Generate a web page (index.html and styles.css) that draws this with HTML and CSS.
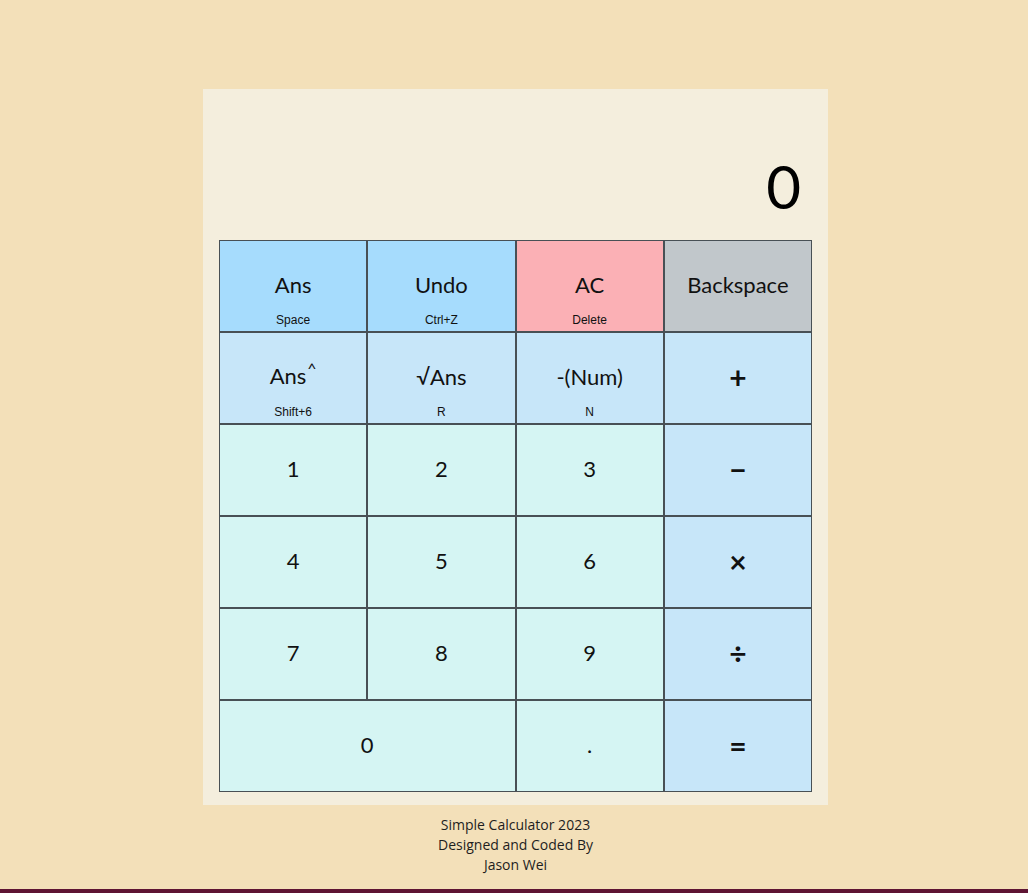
FILE: index.html
```html
<!DOCTYPE html>
<html>
<head>
<meta charset="utf-8">
<link rel="stylesheet" href="styles.css">
</head>
<body>
<main class="page">
  <div class="calc">
    <div class="display">0</div>
    <div class="keys">
      <div class="key k-ans"><span class="lbl">Ans</span><span class="sub">Space</span></div>
      <div class="key k-ans"><span class="lbl">Undo</span><span class="sub">Ctrl+Z</span></div>
      <div class="key k-ac"><span class="lbl">AC</span><span class="sub">Delete</span></div>
      <div class="key k-back"><span class="lbl">Backspace</span></div>

      <div class="key k-fn"><span class="lbl">Ans<sup class="caret">^</sup></span><span class="sub">Shift+6</span></div>
      <div class="key k-fn"><span class="lbl">√Ans</span><span class="sub">R</span></div>
      <div class="key k-fn"><span class="lbl">-(Num)</span><span class="sub">N</span></div>
      <div class="key k-fn op"><span class="lbl">+</span></div>

      <div class="key k-num"><span class="lbl">1</span></div>
      <div class="key k-num"><span class="lbl">2</span></div>
      <div class="key k-num"><span class="lbl">3</span></div>
      <div class="key k-fn op"><span class="lbl">−</span></div>

      <div class="key k-num"><span class="lbl">4</span></div>
      <div class="key k-num"><span class="lbl">5</span></div>
      <div class="key k-num"><span class="lbl">6</span></div>
      <div class="key k-fn op"><span class="lbl">×</span></div>

      <div class="key k-num"><span class="lbl">7</span></div>
      <div class="key k-num"><span class="lbl">8</span></div>
      <div class="key k-num"><span class="lbl">9</span></div>
      <div class="key k-fn op"><span class="lbl">÷</span></div>

      <div class="key k-num wide"><span class="lbl">0</span></div>
      <div class="key k-num"><span class="lbl">.</span></div>
      <div class="key k-fn op"><span class="lbl">=</span></div>
    </div>
  </div>
  <footer class="credits">
    <div>Simple Calculator 2023</div>
    <div>Designed and Coded By</div>
    <div>Jason Wei</div>
  </footer>
</main>
<div class="bottombar"></div>
</body>
</html>
```

FILE: styles.css
```css
html, body {
  margin: 0;
  padding: 0;
}
body {
  background: #f3e0b9;
  height: 893px;
  display: flex;
  flex-direction: column;
  overflow: hidden;
  font-family: "Lato", "Noto Sans", sans-serif;
  color: #111;
}
.page {
  flex: 1;
  display: flex;
  flex-direction: column;
  align-items: center;
  padding-top: 89px;
  padding-left: 3px;
}
.calc {
  width: 593px;
  background: #f4eedd;
  padding: 0 16px 13px 16px;
}
.display {
  height: 151px;
  box-sizing: border-box;
  display: flex;
  justify-content: flex-end;
  align-items: flex-end;
  padding: 0 11px 24px 0;
  font-size: 60px;
  line-height: 1;
  color: #000;
  font-weight: 400;
}
.keys {
  display: grid;
  grid-template-columns: repeat(4, 1fr);
  grid-auto-rows: 92px;
}
.key {
  border: 1px solid #485055;
  display: grid;
  grid-template-rows: 1fr auto 1fr;
  justify-items: center;
  font-size: 22px;
}
.key .lbl {
  grid-row: 2;
  line-height: 26px;
  margin-top: -2px;
}
.key .sub {
  grid-row: 3;
  align-self: end;
  font-family: "Liberation Sans", Arial, sans-serif;
  font-size: 12px;
  line-height: 14px;
  padding-bottom: 4px;
  color: #111;
}
.caret {
  font-size: 16px;
  vertical-align: 0;
  position: relative;
  top: -10px;
  margin-left: 1px;
}
.wide {
  grid-column: span 2;
}
.k-ans { background: #a6dcfd; }
.k-ac { background: #fbb0b5; }
.k-back { background: #c1c7cb; }
.k-fn { background: #c7e6f9; }
.k-num { background: #d5f5f3; }
.op .lbl {
  font-size: 30px;
  font-weight: 700;
}
.credits {
  margin-top: 10px;
  text-align: center;
  font-family: "Open Sans", "Noto Sans", sans-serif;
  font-size: 14px;
  line-height: 20px;
  color: #1e1e1e;
}
.bottombar {
  height: 4px;
  background: #5e1433;
  flex: none;
}
```
